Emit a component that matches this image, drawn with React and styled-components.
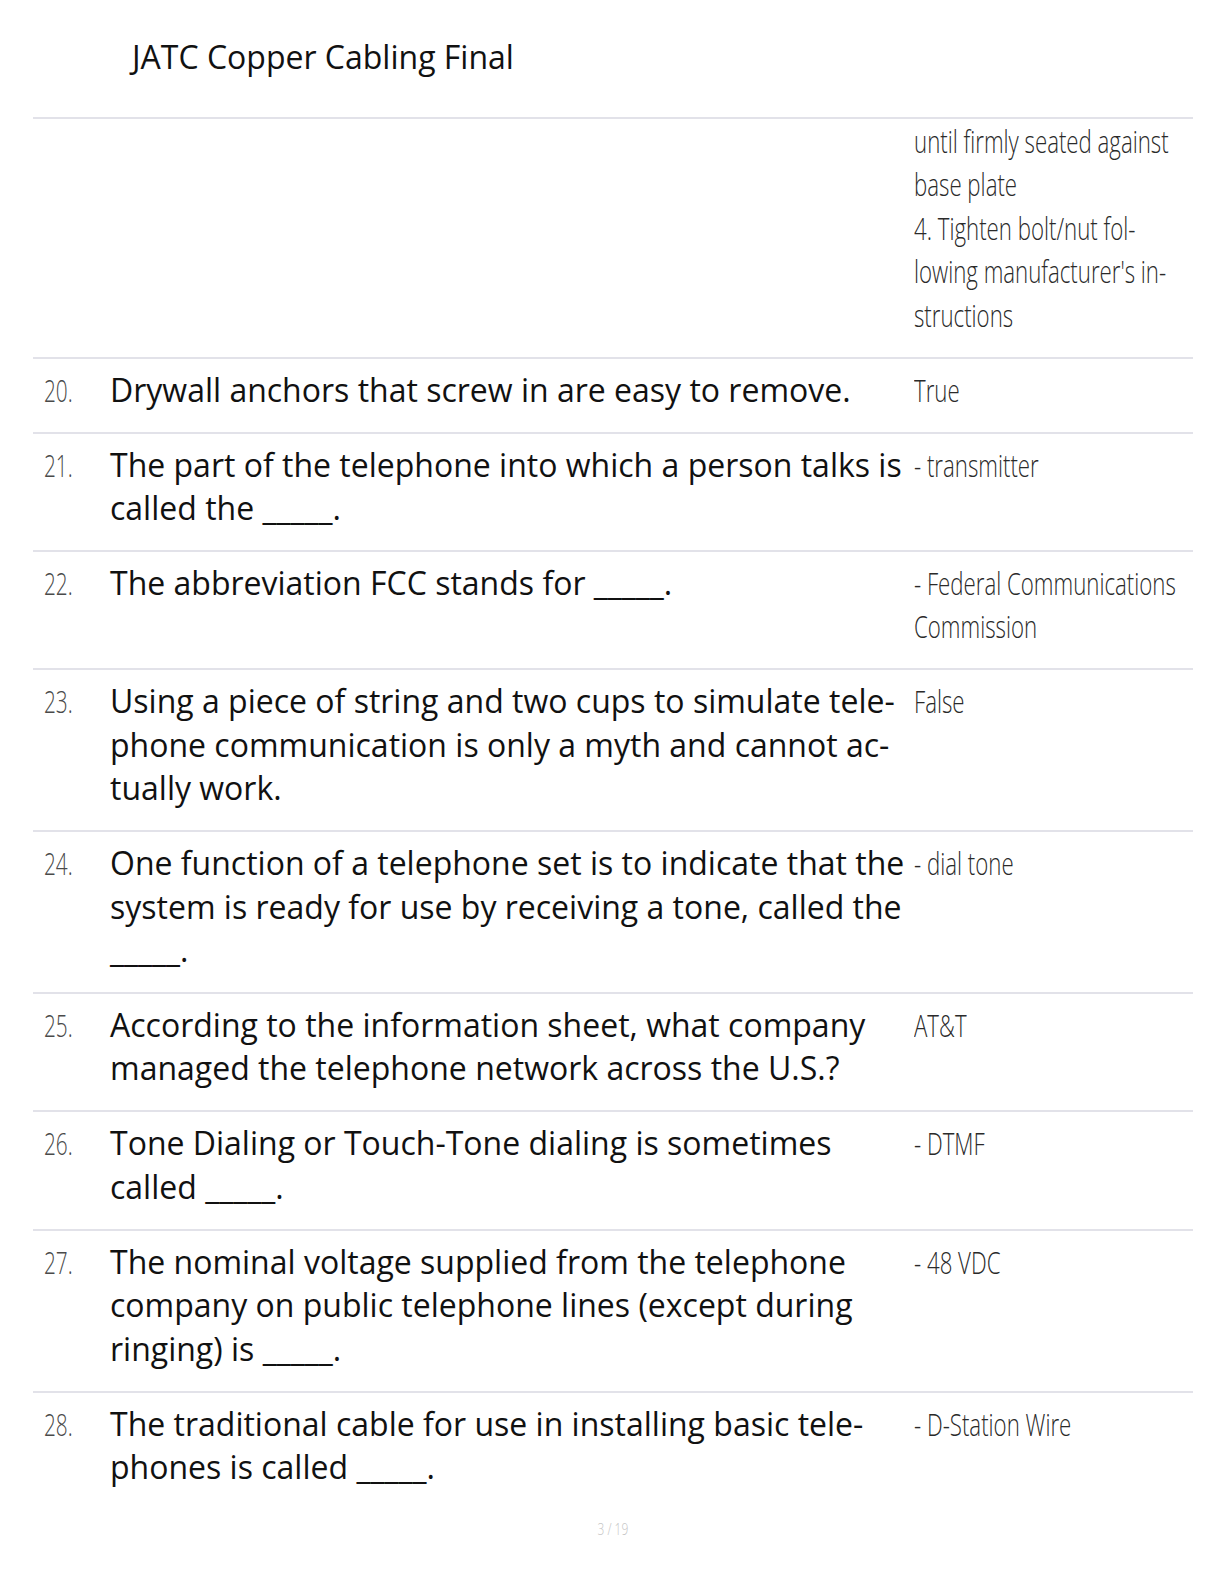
import React from "react";
import styled, { createGlobalStyle } from "styled-components";

const Global = createGlobalStyle`
  html, body { margin: 0; padding: 0; background: #ffffff; }
  body { font-family: "Open Sans", "Noto Sans", sans-serif; color: #111; }
`;

const Page = styled.div`
  width: 1224px;
  min-height: 1584px;
  box-sizing: border-box;
  padding: 0 31px 0 33px;
`;

const Header = styled.header`
  height: 117px;
  box-sizing: border-box;
  padding: 35px 0 0 99px;
  font-size: 32px;
  line-height: 1.362;
  color: #111;
`;

const Row = styled.div`
  display: grid;
  grid-template-columns: 77px 804px 1fr;
  border-top: 2px solid #e2e2e9;
  padding: ${(p) => (p.$cont ? "0" : "9px")} 0 20.6px 0;
  font-size: 32px;
  line-height: 43.4px;
`;

const Num = styled.div`
  padding-left: 11px;
  color: #4a4a4a;
`;

const Condensed = styled.span`
  display: block;
  width: max-content;
  white-space: nowrap;
  font-weight: 300;
  font-size: ${(p) => p.$size || 32}px;
  transform: scaleX(${(p) => p.$scale || 0.695});
  transform-origin: left center;
`;

const Question = styled.div`
  color: #111;
`;

const Answer = styled.div`
  color: #2a2a2a;
  overflow: hidden;
`;

const Footer = styled.footer`
  display: flex;
  justify-content: center;
  padding-top: 8px;
  color: #c4c4c4;
`;

const PageNo = styled(Condensed)`
  font-size: 17px;
  line-height: 23px;
  transform-origin: center center;
`;

const rows = [
  {
    cont: true,
    n: "",
    q: "",
    a: [
      "until firmly seated against",
      "base plate",
      "4. Tighten bolt/nut fol-",
      "lowing manufacturer's in-",
      "structions",
    ],
  },
  { n: "20.", q: "Drywall anchors that screw in are easy to remove.", a: ["True"] },
  {
    n: "21.",
    q: "The part of the telephone into which a person talks is called the _____.",
    a: ["- transmitter"],
  },
  {
    n: "22.",
    q: "The abbreviation FCC stands for _____.",
    a: ["- Federal Communications", "Commission"],
  },
  {
    n: "23.",
    q: "Using a piece of string and two cups to simulate tele\u00ADphone communication is only a myth and cannot ac\u00ADtually work.",
    a: ["False"],
  },
  {
    n: "24.",
    q: "One function of a telephone set is to indicate that the system is ready for use by receiving a tone, called the _____.",
    a: ["- dial tone"],
  },
  {
    n: "25.",
    q: "According to the information sheet, what company managed the telephone network across the U.S.?",
    a: ["AT&T"],
  },
  {
    n: "26.",
    q: "Tone Dialing or Touch-Tone dialing is sometimes called _____.",
    a: ["- DTMF"],
  },
  {
    n: "27.",
    q: "The nominal voltage supplied from the telephone company on public telephone lines (except during ringing) is _____.",
    a: ["- 48 VDC"],
  },
  {
    n: "28.",
    q: "The traditional cable for use in installing basic tele\u00ADphones is called _____.",
    a: ["- D-Station Wire"],
  },
];

export default function App() {
  return (
    <>
      <Global />
      <Page>
        <Header>JATC Copper Cabling Final</Header>
        {rows.map((r, i) => (
          <Row key={i} $cont={r.cont}>
            <Num>{r.n && <Condensed $scale={0.65}>{r.n}</Condensed>}</Num>
            <Question>{r.q}</Question>
            <Answer>
              {r.a.map((line, j) => (
                <Condensed key={j}>{line}</Condensed>
              ))}
            </Answer>
          </Row>
        ))}
        <Footer>
          <PageNo $scale={0.7}>3 / 19</PageNo>
        </Footer>
      </Page>
    </>
  );
}
